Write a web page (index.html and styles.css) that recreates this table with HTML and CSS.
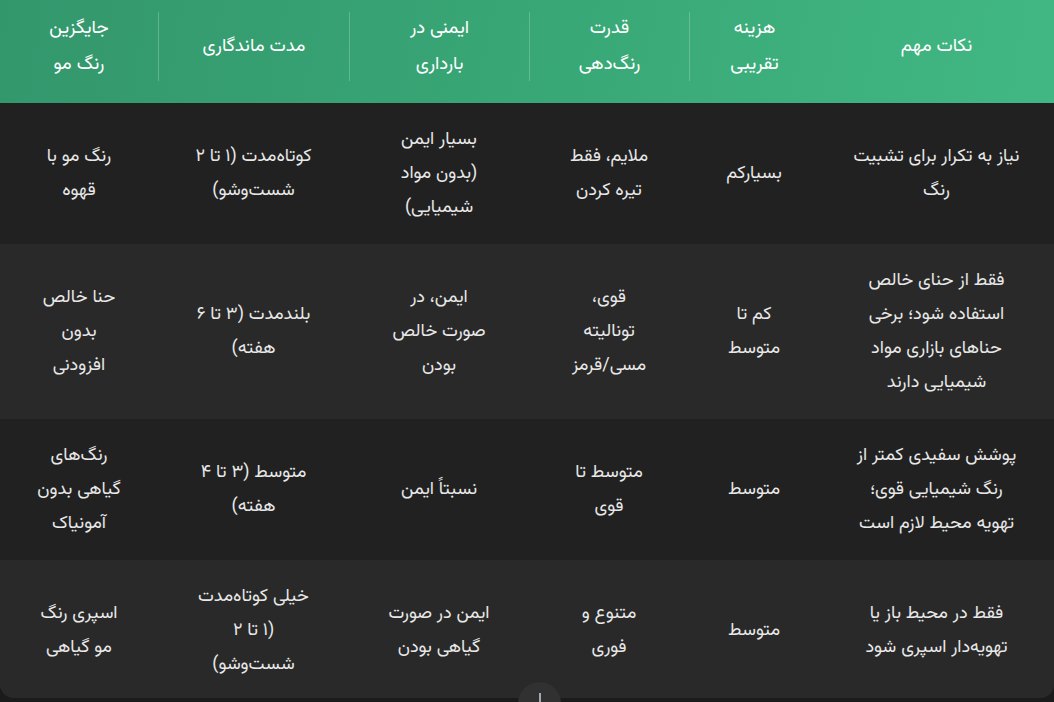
FILE: index.html
```html
<!DOCTYPE html>
<html lang="fa" dir="rtl">
<head>
<meta charset="utf-8">
<link rel="stylesheet" href="styles.css">
</head>
<body>
<div class="page">
  <div class="wrap">
    <table class="cmp">
      <colgroup>
        <col class="c1"><col class="c2"><col class="c3"><col class="c4"><col class="c5"><col class="c6">
      </colgroup>
      <thead>
        <tr>
          <th><div class="th-in">نکات مهم</div></th>
          <th><div class="th-in sep">هزینه<br>تقریبی</div></th>
          <th><div class="th-in sep">قدرت<br>رنگ‌دهی</div></th>
          <th><div class="th-in sep">ایمنی در<br>بارداری</div></th>
          <th><div class="th-in sep">مدت ماندگاری</div></th>
          <th><div class="th-in">جایگزین<br>رنگ مو</div></th>
        </tr>
      </thead>
      <tbody>
        <tr>
          <td>نیاز به تکرار برای تشبیت<br>رنگ</td>
          <td>بسیارکم</td>
          <td>ملایم، فقط<br>تیره کردن</td>
          <td>بسیار ایمن<br>(بدون مواد<br>شیمیایی)</td>
          <td>کوتاه‌مدت (۱ تا ۲<br>شست‌وشو)</td>
          <td>رنگ مو با<br>قهوه</td>
        </tr>
        <tr>
          <td>فقط از حنای خالص<br>استفاده شود؛ برخی<br>حناهای بازاری مواد<br>شیمیایی دارند</td>
          <td>کم تا<br>متوسط</td>
          <td>قوی،<br>تونالیته<br>مسی/قرمز</td>
          <td>ایمن، در<br>صورت خالص<br>بودن</td>
          <td>بلندمدت (۳ تا ۶<br>هفته)</td>
          <td>حنا خالص<br>بدون<br>افزودنی</td>
        </tr>
        <tr>
          <td>پوشش سفیدی کمتر از<br>رنگ شیمیایی قوی؛<br>تهویه محیط لازم است</td>
          <td>متوسط</td>
          <td>متوسط تا<br>قوی</td>
          <td>نسبتاً ایمن</td>
          <td>متوسط (۳ تا ۴<br>هفته)</td>
          <td>رنگ‌های<br>گیاهی بدون<br>آمونیاک</td>
        </tr>
        <tr>
          <td>فقط در محیط باز یا<br>تهویه‌دار اسپری شود</td>
          <td>متوسط</td>
          <td>متنوع و<br>فوری</td>
          <td>ایمن در صورت<br>گیاهی بودن</td>
          <td>خیلی کوتاه‌مدت<br>(۱ تا ۲<br>شست‌وشو)</td>
          <td>اسپری رنگ<br>مو گیاهی</td>
        </tr>
      </tbody>
    </table>
  </div>
  <div class="scroll-btn" role="button" aria-label="scroll"><span class="bar"></span></div>
</div>
</body>
</html>
```

FILE: styles.css
```css
html, body {
  margin: 0;
  padding: 0;
  background: #1b1b1b;
}
body {
  width: 1054px;
  height: 702px;
  overflow: hidden;
  font-family: "Vazirmatn", "Noto Sans Arabic", "DejaVu Sans", sans-serif;
}
.page {
  position: relative;
  width: 1054px;
  height: 702px;
}
.wrap {
  width: 1054px;
  height: 698px;
  border-radius: 0 0 14px 14px;
  overflow: hidden;
  background: #292929;
}
.cmp {
  width: 1054px;
  border-collapse: collapse;
  table-layout: fixed;
}
.c1 { width: 235px; }
.c2 { width: 130px; }
.c3 { width: 160px; }
.c4 { width: 180px; }
.c5 { width: 191px; }
.c6 { width: 158px; }
thead tr {
  background: linear-gradient(100deg, #33976c 0%, #39a877 55%, #41b883 100%);
}
th {
  padding: 12px 0 22px;
  color: #ffffff;
  font-weight: 400;
  font-size: 18.5px;
  line-height: 36px;
}
.th-in {
  height: 69px;
  display: flex;
  align-items: center;
  justify-content: center;
  text-align: center;
}
.th-in.sep {
  border-left: 1px solid rgba(255, 255, 255, 0.22);
}
td {
  padding: 19.5px 12px;
  text-align: center;
  vertical-align: middle;
  white-space: nowrap;
  color: #e8e8e8;
  font-size: 18px;
  line-height: 34px;
}
tbody tr:nth-child(odd) { background: #212121; }
tbody tr:nth-child(even) { background: #292929; }
.scroll-btn {
  position: absolute;
  left: 518px;
  top: 682px;
  width: 43px;
  height: 43px;
  border-radius: 50%;
  background: #313131;
}
.scroll-btn .bar {
  display: block;
  width: 2px;
  height: 12px;
  background: #a3a9b3;
  margin: 11px auto 0;
}
```
